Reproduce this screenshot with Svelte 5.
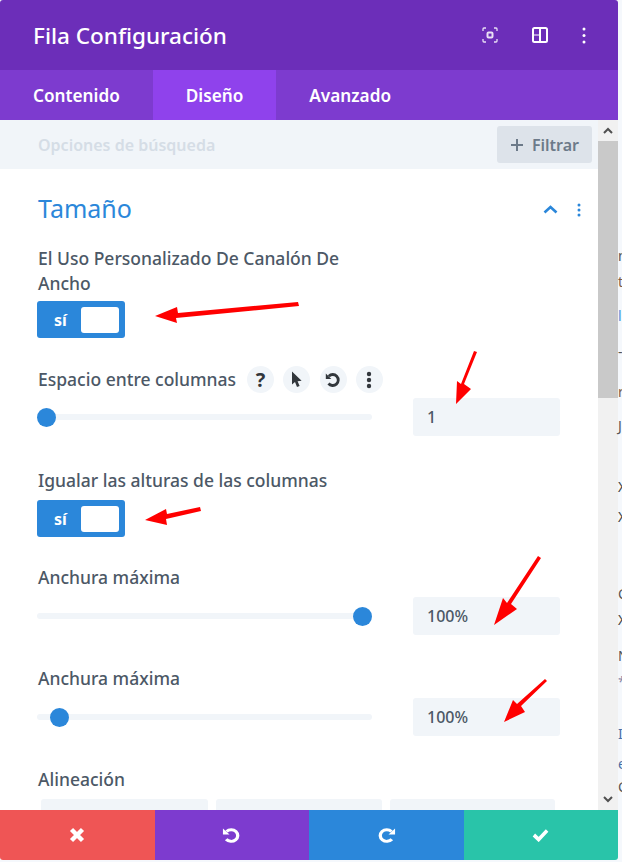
<script>
  const tabs = [
    { name: "Contenido", active: false },
    { name: "Diseño", active: true },
    { name: "Avanzado", active: false }
  ]
  const peek = [
    { y: 256, t: "n", c: "#555" }, { y: 282, t: "t", c: "#7a5c48" }, { y: 316, t: "l", c: "#4a90d9" },
    { y: 352, t: "-", c: "#555" }, { y: 392, t: "r", c: "#7a5c48" }, { y: 426, t: "J", c: "#555" },
    { y: 487, t: "X", c: "#444" }, { y: 517, t: "X", c: "#444" }, { y: 594, t: "C", c: "#555" },
    { y: 620, t: "X", c: "#444" }, { y: 656, t: "N", c: "#555" }, { y: 682, t: "*", c: "#88a" },
    { y: 734, t: "I", c: "#4a6fa5" }, { y: 764, t: "e", c: "#4a6fa5" }, { y: 787, t: "C", c: "#555" }
  ]
</script>

<div class="page">
  <div class="modal">
    <header class="head">
      <h1>Fila Configuración</h1>
      <div class="head-icons">
        <svg width="16" height="16" viewBox="0 0 16 16" fill="none" stroke="#fff" stroke-width="1.300" opacity="0.85">
          <path d="M1 4V2a1 1 0 0 1 1-1h2M12 1h2a1 1 0 0 1 1 1v2M15 12v2a1 1 0 0 1-1 1h-2M4 15H2a1 1 0 0 1-1-1v-2" />
          <rect x="5.500" y="5.500" width="5" height="5" rx="1" stroke-width="2" />
        </svg>
        <svg width="16" height="16" viewBox="0 0 16 16" fill="none" stroke="#fff" stroke-width="2">
          <rect x="1" y="1" width="14" height="14" rx="1.500" />
          <path d="M8 1v14" />
          <path d="M2 8h5" stroke-width="1" />
        </svg>
        <svg width="4" height="17" viewBox="0 0 4 17" fill="#fff">
          <circle cx="2" cy="2" r="1.500" /><circle cx="2" cy="8.500" r="1.500" /><circle cx="2" cy="15" r="1.500" />
        </svg>
      </div>
    </header>

    <nav class="tabs">
      {#each tabs as tab}
        <div class="tab" class:active={tab.active}>{tab.name}</div>
      {/each}
    </nav>

    <div class="body">
      <div class="main">
        <div class="search">
          <span class="placeholder">Opciones de búsqueda</span>
          <button class="filter">
            <svg width="14" height="14" viewBox="0 0 14 14" fill="none" stroke="#6c7a89" stroke-width="2"><path d="M7 1v12M1 7h12" /></svg>
            Filtrar
          </button>
        </div>

        <div class="content">
          <div class="section-head">
            <h2>Tamaño</h2>
            <div class="section-icons">
              <svg width="15" height="9" viewBox="0 0 15 9" fill="none" stroke="#2b87da" stroke-width="2.600"><path d="M1.500 7.500l6-5.500 6 5.500" /></svg>
              <svg width="4" height="14" viewBox="0 0 4 14" fill="#2b87da">
                <circle cx="2" cy="2" r="1.500" /><circle cx="2" cy="7" r="1.500" /><circle cx="2" cy="12" r="1.500" />
              </svg>
            </div>
          </div>

          <div class="field toggle-field">
            <div class="label wrap">El Uso Personalizado De Canalón De Ancho</div>
            <div class="toggle"><span>sí</span><i></i></div>
          </div>

          <div class="field tools-field">
            <div class="label-row">
              <div class="label">Espacio entre columnas</div>
              <div class="tools">
                <span class="tool q">?</span>
                <span class="tool">
                  <svg width="11" height="17" viewBox="0 0 11 17" fill="#32373c"><path d="M1 0.500v13l3-2.500 2 5 2.600-1-2-4.800 4-.4z" /></svg>
                </span>
                <span class="tool">
                  <svg width="16" height="16" viewBox="0 0 16 16" fill="none" stroke="#32373c" stroke-width="2.800">
                    <path d="M3.800 4.200A5.500 5.500 0 1 1 3.500 11.500" />
                    <path d="M0.800 1.500v5.500h5.500z" fill="#32373c" stroke="none" />
                  </svg>
                </span>
                <span class="tool">
                  <svg width="6" height="18" viewBox="0 0 6 18" fill="#32373c">
                    <circle cx="3" cy="3" r="2.200" /><circle cx="3" cy="9" r="2.200" /><circle cx="3" cy="15" r="2.200" />
                  </svg>
                </span>
              </div>
            </div>
            <div class="slider-row">
              <div class="track"><i class="thumb" style="left: 0px"></i></div>
              <div class="value">1</div>
            </div>
          </div>

          <div class="field toggle-field">
            <div class="label">Igualar las alturas de las columnas</div>
            <div class="toggle"><span>sí</span><i></i></div>
          </div>

          <div class="field">
            <div class="label">Anchura máxima</div>
            <div class="slider-row">
              <div class="track"><i class="thumb" style="left: 316px"></i></div>
              <div class="value">100%</div>
            </div>
          </div>

          <div class="field">
            <div class="label">Anchura máxima</div>
            <div class="slider-row">
              <div class="track"><i class="thumb" style="left: 13px"></i></div>
              <div class="value">100%</div>
            </div>
          </div>

          <div class="field">
            <div class="label">Alineación</div>
            <div class="align">
              <div></div><div></div><div></div>
            </div>
          </div>
        </div>
      </div>

      <div class="scrollbar">
        <div class="sb-btn">
          <svg width="10" height="7" viewBox="0 0 10 7" fill="none" stroke="#505050" stroke-width="2"><path d="M1 6l4-4 4 4" /></svg>
        </div>
        <div class="sb-thumb"></div>
        <div class="sb-rest"></div>
        <div class="sb-btn">
          <svg width="10" height="7" viewBox="0 0 10 7" fill="none" stroke="#505050" stroke-width="2"><path d="M1 1l4 4 4-4" /></svg>
        </div>
      </div>
    </div>

    <footer class="foot">
      <button class="red" aria-label="Cancelar">
        <svg width="16" height="16" viewBox="0 0 16 16" fill="none" stroke="#fff" stroke-width="4.400"><path d="M2.500 2.500l11 11M13.500 2.500l-11 11" /></svg>
      </button>
      <button class="purple" aria-label="Deshacer">
        <svg width="19" height="17" viewBox="0 0 16 16" preserveAspectRatio="none" fill="none" stroke="#fff" stroke-width="2.800">
          <path d="M3.800 4.200A5.500 5.500 0 1 1 3.500 11.500" />
          <path d="M0.800 1.500v5.500h5.500z" fill="#fff" stroke="none" />
        </svg>
      </button>
      <button class="blue" aria-label="Rehacer">
        <svg width="19" height="17" viewBox="0 0 16 16" preserveAspectRatio="none" fill="none" stroke="#fff" stroke-width="2.800">
          <path d="M12.200 4.200A5.500 5.500 0 1 0 12.500 11.500" />
          <path d="M15.200 1.500v5.500H9.700z" fill="#fff" stroke="none" />
        </svg>
      </button>
      <button class="green" aria-label="Guardar">
        <svg width="17" height="14" viewBox="0 0 18 14" preserveAspectRatio="none" fill="none" stroke="#fff" stroke-width="3.800"><path d="M2 7l5 4.500L16 2.500" /></svg>
      </button>
    </footer>
  </div>

  <div class="behind">
    {#each peek as p}
      <span style="top: {p.y - 9}px; color: {p.c}">{p.t}</span>
    {/each}
  </div>

  <!-- red annotation arrows on top of the screenshot -->
  <svg class="arrows" width="622" height="862" viewBox="0 0 622 862" fill="#f00" stroke="none">
    <path d="M298 302L178 313L177 307L155 316L177 323L176 318L299 306z" />
    <path d="M477 352L464 384L471 389L456 404L457 381L461 384L474 351z" />
    <path d="M200 507L167 514L166 509L145 520L167 525L166 519L201 511z" />
    <path d="M541 558L511 604L517 609L494 625L503 598L507 603L538 556z" />
    <path d="M547 681L521 706L525 712L504 722L513 700L517 704L545 679z" />
  </svg>
</div>

<style>
  :global(body) {
    margin: 0;
    background: #fff;
  }
  .page {
    position: relative;
    width: 622px;
    height: 862px;
    overflow: hidden;
    background: #f5f8fc;
    font-family: "Noto Sans", "Open Sans", sans-serif;
  }
  .modal {
    width: 618px;
    height: 860px;
    display: flex;
    flex-direction: column;
    border-radius: 3px;
    overflow: hidden;
    background: #fff;
  }
  .head {
    height: 70px;
    flex: none;
    display: flex;
    align-items: center;
    justify-content: space-between;
    padding: 0 32px 0 33px;
    background: #6c2eb9;
    color: #fff;
  }
  h1 {
    margin: 0;
    font-size: 22.500px;
    font-weight: 500;
  }
  .head-icons {
    display: flex;
    align-items: center;
    gap: 34px;
  }
  .tabs {
    height: 50px;
    flex: none;
    display: flex;
    background: #7d3bcf;
    color: #fff;
    font-size: 17.200px;
    font-weight: 600;
  }
  .tab {
    display: flex;
    align-items: center;
    padding: 0 33px;
  }
  .tab.active {
    background: #8f42ec;
  }
  .body {
    flex: 1;
    min-height: 0;
    display: flex;
  }
  .main {
    flex: 1;
    min-width: 0;
    overflow: hidden;
  }
  .search {
    height: 49px;
    display: flex;
    align-items: center;
    justify-content: space-between;
    padding: 0 6px 0 38px;
    background: #f1f5f9;
  }
  .placeholder {
    font-size: 16px;
    font-weight: 600;
    color: #d5dde6;
  }
  .filter {
    width: 95px;
    height: 37px;
    display: flex;
    align-items: center;
    justify-content: center;
    gap: 8px;
    border: 0;
    border-radius: 3px;
    background: #dde3ea;
    color: #6c7a89;
    font: 600 16px "Noto Sans", sans-serif;
  }
  .content {
    padding: 0 38px;
  }
  .section-head {
    height: 77px;
    display: flex;
    align-items: center;
    justify-content: space-between;
    margin-right: -21px;
  }
  h2 {
    margin: 0;
    font-size: 25px;
    font-weight: 400;
    color: #2b87da;
  }
  .section-icons {
    display: flex;
    align-items: center;
    gap: 19px;
    padding-top: 4px;
  }
  .field {
    margin-bottom: 31px;
  }
  .toggle-field {
    margin-bottom: 28px;
  }
  .tools-field {
    margin-bottom: 32px;
  }
  .label {
    font-size: 17.500px;
    font-weight: 500;
    line-height: 25px;
    color: #4c5866;
    margin-bottom: 7px;
  }
  .label.wrap {
    width: 335px;
    margin-bottom: 5px;
  }
  .label-row {
    display: flex;
    align-items: center;
    gap: 11px;
    height: 27px;
    margin-bottom: 5px;
  }
  .label-row .label {
    margin: 0;
  }
  .tools {
    display: flex;
    gap: 9.300px;
  }
  .tool {
    width: 27px;
    height: 27px;
    display: flex;
    align-items: center;
    justify-content: center;
    border-radius: 50%;
    background: #f1f5f9;
    color: #32373c;
  }
  .tool.q {
    font-size: 20px;
    font-weight: 700;
  }
  .toggle {
    width: 88px;
    height: 37px;
    display: flex;
    align-items: center;
    justify-content: space-between;
    box-sizing: border-box;
    margin-left: -1px;
    padding: 0 6px 0 17px;
    border-radius: 3px;
    background: #2b87da;
    color: #fff;
    font-size: 16px;
    font-weight: 700;
  }
  .toggle i {
    width: 38px;
    height: 26px;
    border-radius: 3px;
    background: #fff;
  }
  .slider-row {
    display: flex;
    align-items: center;
    justify-content: space-between;
    width: 523px;
    margin-left: -1px;
  }
  .track {
    position: relative;
    width: 335px;
    height: 6px;
    border-radius: 3px;
    background: #f1f5f9;
  }
  .thumb {
    position: absolute;
    top: -6.500px;
    width: 19px;
    height: 19px;
    border-radius: 50%;
    background: #2b87da;
  }
  .value {
    width: 147px;
    height: 38px;
    box-sizing: border-box;
    display: flex;
    align-items: center;
    padding-left: 14px;
    border-radius: 3px;
    background: #f1f5f9;
    color: #4c5866;
    font-size: 16px;
    font-weight: 500;
  }
  .align {
    display: grid;
    grid-template-columns: 167px 166px 165px;
    gap: 8px;
    margin-left: 3px;
  }
  .align div {
    height: 40px;
    border-radius: 3px;
    background: #f1f5f9;
  }
  .scrollbar {
    width: 20px;
    flex: none;
    display: flex;
    flex-direction: column;
    background: #f1f1f1;
  }
  .sb-btn {
    height: 21px;
    flex: none;
    display: flex;
    align-items: center;
    justify-content: center;
  }
  .sb-thumb {
    height: 257px;
    flex: none;
    background: #c9c9c9;
  }
  .sb-rest {
    flex: 1;
  }
  .foot {
    height: 50px;
    flex: none;
    display: grid;
    grid-template-columns: repeat(4, 1fr);
  }
  .foot button {
    display: flex;
    align-items: center;
    justify-content: center;
    border: 0;
    padding: 0;
  }
  .red { background: #ef5555; }
  .purple { background: #7d3bcf; }
  .blue { background: #2b87da; }
  .green { background: #29c4a9; }
  .behind span {
    position: absolute;
    left: 618px;
    font-size: 14px;
    line-height: 18px;
  }
  .arrows {
    position: absolute;
    top: 0;
    left: 0;
    pointer-events: none;
  }
</style>
